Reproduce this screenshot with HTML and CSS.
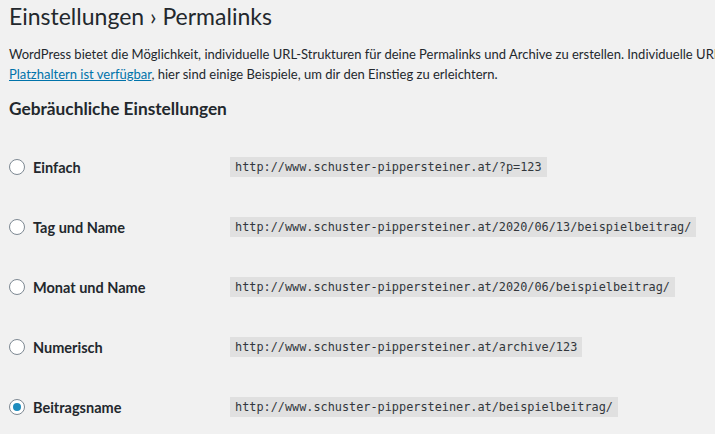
FILE: index.html
```html
<!DOCTYPE html>
<html lang="de">
<head>
<meta charset="utf-8">
<title>Permalinks</title>
<link rel="stylesheet" href="styles.css">
</head>
<body>
<div class="wrap">
  <h1 class="title">Einstellungen › Permalinks</h1>
  <p class="intro"><span class="line">WordPress bietet die Möglichkeit, individuelle URL-Strukturen für deine Permalinks und Archive zu erstellen. Individuelle URL-Strukturen können die Ästhetik, Benutzerfreundlichkeit und Vorwärtskompatibilität deiner Links verbessern. Eine <a href="#">Vielzahl von</a></span><span class="line"><a href="#">Platzhaltern ist verfügbar</a>, hier sind einige Beispiele, um dir den Einstieg zu erleichtern.</span></p>
  <h2 class="section">Gebräuchliche Einstellungen</h2>
  <div class="options">
    <div class="row">
      <label class="choice"><span class="radio"></span>Einfach</label>
      <code class="url">http://www.schuster-pippersteiner.at/?p=123</code>
    </div>
    <div class="row">
      <label class="choice"><span class="radio"></span>Tag und Name</label>
      <code class="url">http://www.schuster-pippersteiner.at/2020/06/13/beispielbeitrag/</code>
    </div>
    <div class="row">
      <label class="choice"><span class="radio"></span>Monat und Name</label>
      <code class="url">http://www.schuster-pippersteiner.at/2020/06/beispielbeitrag/</code>
    </div>
    <div class="row">
      <label class="choice"><span class="radio"></span>Numerisch</label>
      <code class="url">http://www.schuster-pippersteiner.at/archive/123</code>
    </div>
    <div class="row">
      <label class="choice"><span class="radio checked"></span>Beitragsname</label>
      <code class="url">http://www.schuster-pippersteiner.at/beispielbeitrag/</code>
    </div>
  </div>
</div>
</body>
</html>
```
FILE: styles.css
```css
html, body {
  margin: 0;
  padding: 0;
  background: #f1f1f1;
  overflow: hidden;
}
body {
  font-family: "Lato", "Noto Sans", sans-serif;
  color: #23282d;
  font-size: 13px;
}
.wrap {
  padding-left: 9px;
}
.title {
  margin: 2px 0 0;
  font-size: 23px;
  font-weight: 400;
  line-height: 29px;
  white-space: nowrap;
}
.intro {
  margin: 14px 0 0;
  font-size: 13px;
  line-height: 19.5px;
}
.intro .line {
  display: block;
  white-space: nowrap;
}
.intro a {
  color: #0073aa;
}
.section {
  margin: 13px 0 0;
  font-size: 17.3px;
  font-weight: 700;
  line-height: 24px;
}
.options {
  margin-top: 16px;
}
.row {
  display: flex;
  align-items: center;
  height: 60px;
}
.choice {
  display: flex;
  align-items: center;
  width: 221px;
  font-size: 14.5px;
  font-weight: 700;
}
.radio {
  width: 14px;
  height: 14px;
  border: 1px solid #7e8993;
  border-radius: 50%;
  background: #fff;
  margin-right: 8px;
  display: flex;
  align-items: center;
  justify-content: center;
  flex: none;
}
.radio.checked::before {
  content: "";
  width: 8px;
  height: 8px;
  border-radius: 50%;
  background: #1e8cbe;
}
.url {
  font-family: "DejaVu Sans Mono", "Liberation Mono", monospace;
  font-size: 11.85px;
  line-height: 20px;
  padding: 0 5px;
  background: #e0e0e0;
  color: #32373c;
  white-space: nowrap;
}
```
